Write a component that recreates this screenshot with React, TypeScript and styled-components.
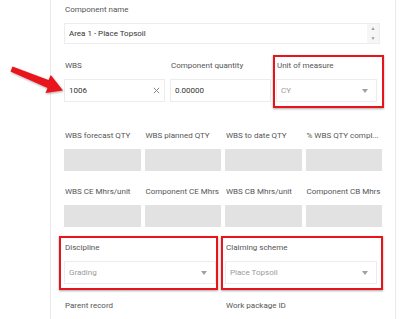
import React from "react";
import styled, { createGlobalStyle } from "styled-components";

const GlobalStyle = createGlobalStyle`
  html, body { margin: 0; padding: 0; background: #fff; }
  body { font-family: Roboto, "Liberation Sans", Arial, sans-serif; }
  * { box-sizing: border-box; }
`;

const Page = styled.div`
  position: relative;
  width: 400px;
  height: 319px;
  overflow: hidden;
  background: #fff;
`;

const Panel = styled.div`
  margin-left: 50px;
  width: 346px;
  min-height: 319px;
  border-left: 1px solid #ebebeb;
  border-right: 1px solid #ebebeb;
  padding: 4px 13px 0 13px;
`;

const Row = styled.div<{ $cols: number; $gap?: number; $mb?: number }>`
  display: grid;
  grid-template-columns: repeat(${(p) => p.$cols}, 1fr);
  column-gap: ${(p) => p.$gap ?? 0}px;
  margin-bottom: ${(p) => p.$mb ?? 16}px;
`;

const Field = styled.div`
  position: relative;
  display: flex;
  flex-direction: column;
  min-width: 0;
`;

const Label = styled.div`
  height: 12px;
  line-height: 12px;
  font-size: 8px;
  color: #555;
  margin-bottom: 7px;
  white-space: nowrap;
  overflow: hidden;
  text-overflow: ellipsis;
  padding-left: 1px;
`;

const InputBox = styled.div<{ $h?: number; $trim?: number }>`
  position: relative;
  display: flex;
  align-items: center;
  height: ${(p) => p.$h ?? 23}px;
  width: calc(100% - ${(p) => p.$trim ?? 5}px);
  border: 1px solid #ececec;
  background: #fff;
  padding-left: 4px;
  font-size: 8px;
  color: #333;
`;

const Value = styled.span<{ $muted?: boolean }>`
  flex: 1;
  color: ${(p) => (p.$muted ? "#9a9a9a" : "#333")};
  white-space: nowrap;
`;

const Spinner = styled.div`
  align-self: stretch;
  width: 12px;
  background: #f6f6f6;
  display: flex;
  flex-direction: column;
  align-items: center;
  justify-content: space-around;
  color: #9a9a9a;
  font-size: 5px;
  line-height: 5px;
`;

const ClearIcon = styled.span`
  width: 14px;
  display: flex;
  align-items: center;
  justify-content: center;
  margin-right: 1px;
`;

const Caret = styled.span`
  width: 0;
  height: 0;
  border-left: 3px solid transparent;
  border-right: 3px solid transparent;
  border-top: 4px solid #a0a0a0;
  margin-right: 8px;
`;

const GreyBox = styled.div`
  height: 22px;
  background: #e2e2e2;
`;

const Highlight = styled.div<{ $t: number; $r: number; $b: number; $l: number }>`
  position: absolute;
  top: ${(p) => p.$t}px;
  right: ${(p) => p.$r}px;
  bottom: ${(p) => p.$b}px;
  left: ${(p) => p.$l}px;
  border: 2px solid #e8141c;
  box-shadow: 0 1px 2px rgba(0, 0, 0, 0.35);
  pointer-events: none;
`;

const ArrowOverlay = styled.svg`
  position: absolute;
  left: 0;
  top: 0;
  overflow: visible;
`;

const Select = ({ value }: { value: string }) => (
  <InputBox $h={23}>
    <Value $muted>{value}</Value>
    <Caret />
  </InputBox>
);

const greyRow1 = ["WBS forecast QTY", "WBS planned QTY", "WBS to date QTY", "% WBS QTY compl..."];
const greyRow2 = ["WBS CE Mhrs/unit", "Component CE Mhrs", "WBS CB Mhrs/unit", "Component CB Mhrs"];

export default function App() {
  return (
    <Page>
      <GlobalStyle />
      <Panel>
        <Row $cols={1}>
          <Field>
            <Label>Component name</Label>
            <InputBox $h={21} $trim={2}>
              <Value>Area 1 - Place Topsoil</Value>
              <Spinner>
                <span>▲</span>
                <span>▼</span>
              </Spinner>
            </InputBox>
          </Field>
        </Row>

        <Row $cols={3} $mb={28}>
          <Field>
            <Label>WBS</Label>
            <InputBox>
              <Value>1006</Value>
              <ClearIcon>
                <svg width="7" height="7" viewBox="0 0 7 7">
                  <path d="M0.8 0.8 L6.2 6.2 M6.2 0.8 L0.8 6.2" stroke="#8a8a8a" strokeWidth="1" />
                </svg>
              </ClearIcon>
            </InputBox>
          </Field>
          <Field>
            <Label>Component quantity</Label>
            <InputBox>
              <Value>0.00000</Value>
            </InputBox>
          </Field>
          <Field>
            <Label>Unit of measure</Label>
            <Select value="CY" />
            <Highlight $t={-5} $r={-2} $b={-6} $l={-3} />
          </Field>
        </Row>

        <Row $cols={4} $gap={4} $mb={15}>
          {greyRow1.map((l) => (
            <Field key={l}>
              <Label>{l}</Label>
              <GreyBox />
            </Field>
          ))}
        </Row>

        <Row $cols={4} $gap={4} $mb={15}>
          {greyRow2.map((l) => (
            <Field key={l}>
              <Label>{l}</Label>
              <GreyBox />
            </Field>
          ))}
        </Row>

        <Row $cols={2} $gap={4}>
          <Field>
            <Label>Discipline</Label>
            <Select value="Grading" />
            <Highlight $t={-6} $r={3} $b={-6} $l={-5} />
          </Field>
          <Field>
            <Label>Claiming scheme</Label>
            <Select value="Place Topsoil" />
            <Highlight $t={-6} $r={-1} $b={-6} $l={-4} />
          </Field>
        </Row>

        <Row $cols={2} $gap={4}>
          <Field>
            <Label>Parent record</Label>
            <InputBox />
          </Field>
          <Field>
            <Label>Work package ID</Label>
            <InputBox />
          </Field>
        </Row>
      </Panel>

      <ArrowOverlay width="400" height="319" viewBox="0 0 400 319">
        <defs>
          <filter id="sh" x="-20%" y="-20%" width="140%" height="140%">
            <feDropShadow dx="0.5" dy="1" stdDeviation="0.8" floodColor="#000" floodOpacity="0.35" />
          </filter>
        </defs>
        <polygon
          filter="url(#sh)"
          fill="#e8141c"
          points="12.5,66.5 48.5,80 50.8,75 63,90.5 45.5,93 47.5,88 10.5,71.5"
        />
      </ArrowOverlay>
    </Page>
  );
}
